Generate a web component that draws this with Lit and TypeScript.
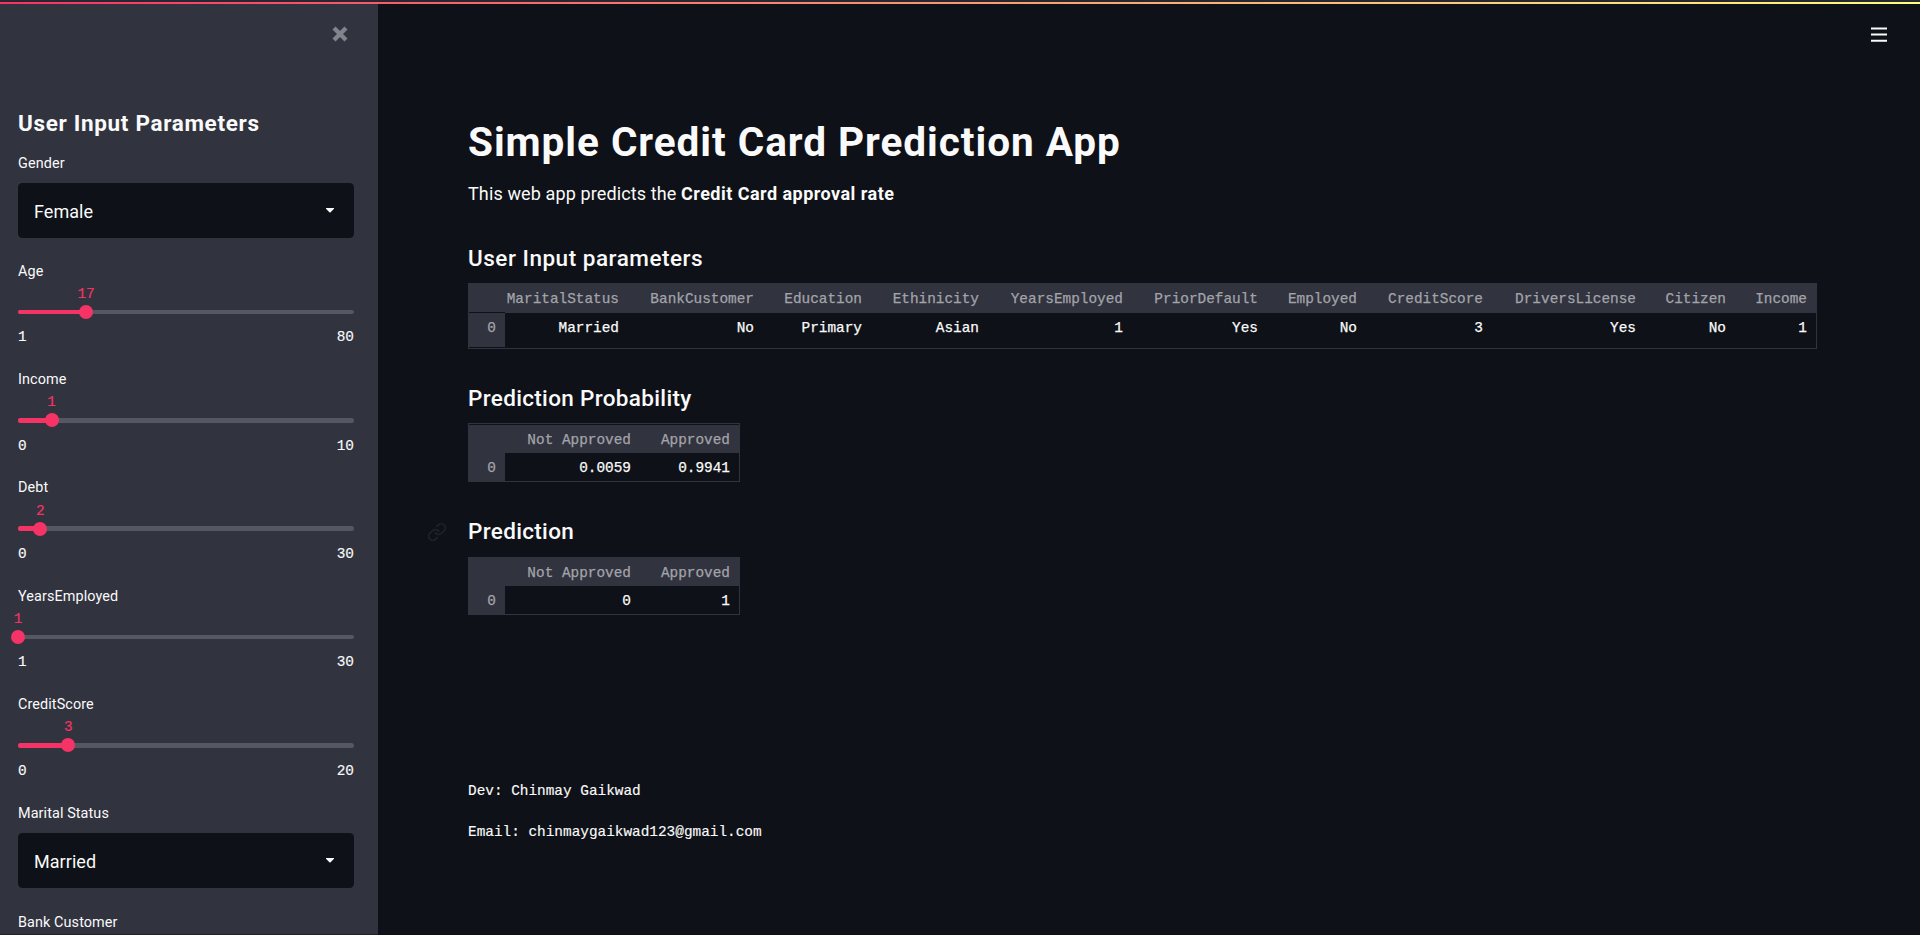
import { LitElement, html, css } from "lit";
import { customElement, property } from "lit/decorators.js";

const pct = (value: number, min: number, max: number) => ((value - min) / (max - min)) * 100;

@customElement("side-slider")
class SideSlider extends LitElement {
  @property() label = "";
  @property({ type: Number }) value = 0;
  @property({ type: Number }) min = 0;
  @property({ type: Number }) max = 10;

  static styles = css`
    :host { display: block; height: 108.33px; }
    .label { font-size: 14.4px; line-height: 24.4px; letter-spacing: 0.1px; }
    .mono { font-family: "Liberation Mono", monospace; font-size: 14.4px; line-height: 18px; -webkit-text-stroke: 0.15px; }
    .value { margin-top: 0.9px; color: #f63366; width: max-content; transform: translateX(-50%); }
    .track { position: relative; margin-top: 6.7px; height: 4.4px; border-radius: 4px; background: #555761; }
    .fill { height: 100%; background: #f63366; border-radius: 4px 0 0 4px; }
    .thumb { position: absolute; width: 14px; height: 14px; top: -4.7px; margin-left: -7px; border-radius: 50%; background: #f63366; }
    .range { display: flex; justify-content: space-between; margin-top: 14.2px; }
  `;

  render() {
    const p = pct(this.value, this.min, this.max);
    return html`
      <div class="label">${this.label}</div>
      <div class="mono value" style="margin-left:${p}%">${this.value}</div>
      <div class="track">
        <div class="fill" style="width:${p}%"></div>
        <div class="thumb" style="left:${p}%"></div>
      </div>
      <div class="mono range"><span>${this.min}</span><span>${this.max}</span></div>
    `;
  }
}

@customElement("side-select")
class SideSelect extends LitElement {
  @property() label = "";
  @property() value = "";

  static styles = css`
    :host { display: block; height: 108.33px; }
    .label { font-size: 14.4px; line-height: 25px; letter-spacing: 0.1px; }
    .box { display: flex; align-items: center; justify-content: space-between; box-sizing: border-box; height: 55px;
      margin-top: 7px; padding: 0 20px 0 16px; border-radius: 4.5px; background: #0e1117; font-size: 18px; letter-spacing: 0.05px; }
    .text { padding-top: 1px; }
    svg { display: block; }
  `;

  render() {
    return html`
      <div class="label">${this.label}</div>
      ${this.value
        ? html`<div class="box">
            <span class="text">${this.value}</span>
            <svg width="8" height="5" viewBox="0 0 8 5"><path d="M0 0H8V.8L4.6 4.3Q4 4.8 3.4 4.3L0 .8Z" fill="#fafafa" /></svg>
          </div>`
        : ""}
    `;
  }
}

@customElement("data-frame")
class DataFrame extends LitElement {
  @property({ attribute: false }) columns: { name: string; value: string; width: number }[] = [];

  static styles = css`
    :host { display: block; width: max-content; border: 1px solid #31333f; box-sizing: border-box;
      font-family: "Liberation Mono", monospace; font-size: 14.4px; color: #fafafa; }
    .row { display: flex; }
    .cell { box-sizing: border-box; text-align: right; padding-right: 10px; white-space: pre; flex: none; -webkit-text-stroke: 0.25px; }
    .cell:last-child { padding-right: 9px; }
    .head { box-sizing: border-box; background: #31333f; color: #a3a4a9; height: var(--head-height, 29px); line-height: var(--head-line, 31px);
      border-top: var(--top-rule, 0) solid #0e1117; }
    .body { height: var(--body-height, 28px); line-height: 30px; }
    .index { width: 36px; padding-right: 9px; background: #31333f; color: #a3a4a9; border-bottom: var(--index-rule, 0) solid #0e1117; }
  `;

  render() {
    return html`
      <div class="row head">
        <div class="cell index"></div>
        ${this.columns.map((c) => html`<div class="cell" style="width:${c.width}px">${c.name}</div>`)}
      </div>
      <div class="row body">
        <div class="cell index">0</div>
        ${this.columns.map((c) => html`<div class="cell" style="width:${c.width}px">${c.value}</div>`)}
      </div>
    `;
  }
}

const inputs = [
  { name: "MaritalStatus", value: "Married", width: 124 },
  { name: "BankCustomer", value: "No", width: 135 },
  { name: "Education", value: "Primary", width: 108 },
  { name: "Ethinicity", value: "Asian", width: 117 },
  { name: "YearsEmployed", value: "1", width: 144 },
  { name: "PriorDefault", value: "Yes", width: 135 },
  { name: "Employed", value: "No", width: 99 },
  { name: "CreditScore", value: "3", width: 126 },
  { name: "DriversLicense", value: "Yes", width: 153 },
  { name: "Citizen", value: "No", width: 90 },
  { name: "Income", value: "1", width: 80 },
];
const outcome = (no: string, yes: string) => [
  { name: "Not Approved", value: no, width: 136 },
  { name: "Approved", value: yes, width: 98 },
];

@customElement("app-root")
class AppRoot extends LitElement {
  static styles = css`
    :host { display: flex; position: relative; width: 100%; height: 935px; overflow: hidden; background: #0e1117;
      color: #fafafa; font-family: Roboto, sans-serif; font-size: 18px; }
    .stripe { position: absolute; inset: 0 0 auto 0; height: 2px; border-top: 2px solid #262730;
      background: linear-gradient(90deg, #f63366, #fffd80) padding-box; z-index: 2; }
    .edge { position: absolute; inset: auto 0 0 0; height: 1px; background: rgba(22, 8, 20, 0.45); z-index: 2; }
    .side { box-sizing: border-box; width: 378px; flex: none; padding: 26px 24px 0 18px; background: #31333f; }
    .close { display: flex; justify-content: flex-end; padding-right: 6px; height: 83.3px; }
    h1, h2, h3, p { margin: 0; }
    h2 { font-size: 22.5px; line-height: 28px; height: 42.2px; font-weight: 700; letter-spacing: 0.67px; }
    .main { flex: 1; padding: 115px 90px 0; }
    h1 { font-size: 40.5px; line-height: 54px; font-weight: 700; letter-spacing: 0.96px; }
    .lead { margin-top: 10.9px; line-height: 28px; letter-spacing: 0.12px; }
    .lead b { letter-spacing: 0.47px; }
    h3 { position: relative; font-size: 22.5px; line-height: 28px; font-weight: 500; letter-spacing: 0.33px; }
    .h-input { margin-top: 36.4px; letter-spacing: 0.52px; }
    .h-prob { margin-top: 35px; }
    .h-pred { margin-top: 35.3px; }
    .t-input { margin-top: 10.7px; --body-height: 35px; --index-rule: 1px; }
    .t-prob { margin-top: 11px; --top-rule: 1px; }
    .t-pred { margin-top: 11.7px; --head-height: 28px; --head-line: 31px; }
    .link { position: absolute; left: -41px; top: 4.5px; opacity: 0.07; }
    .menu { position: absolute; right: 33px; top: 27px; }
    .foot { font-family: "Liberation Mono", monospace; font-size: 14.4px; line-height: 22px; -webkit-text-stroke: 0.15px; }
    .dev { margin-top: 164.6px; }
    .mail { margin-top: 19px; }
  `;

  render() {
    return html`
      <div class="stripe"></div>
      <div class="edge"></div>
      <aside class="side">
        <div class="close">
          <svg width="16" height="16" viewBox="0 0 16 16"><path d="M2 2L14 14M14 2L2 14" stroke="#83848b" stroke-width="4.3" /></svg>
        </div>
        <h2>User Input Parameters</h2>
        <side-select label="Gender" value="Female"></side-select>
        <side-slider label="Age" value="17" min="1" max="80"></side-slider>
        <side-slider label="Income" value="1" min="0" max="10"></side-slider>
        <side-slider label="Debt" value="2" min="0" max="30"></side-slider>
        <side-slider label="YearsEmployed" value="1" min="1" max="30"></side-slider>
        <side-slider label="CreditScore" value="3" min="0" max="20"></side-slider>
        <side-select label="Marital Status" value="Married"></side-select>
        <side-select label="Bank Customer"></side-select>
      </aside>
      <main class="main">
        <h1>Simple Credit Card Prediction App</h1>
        <p class="lead">This web app predicts the <b>Credit Card approval rate</b></p>
        <h3 class="h-input">User Input parameters</h3>
        <data-frame class="t-input" .columns=${inputs}></data-frame>
        <h3 class="h-prob">Prediction Probability</h3>
        <data-frame class="t-prob" .columns=${outcome("0.0059", "0.9941")}></data-frame>
        <h3 class="h-pred">
          <svg class="link" width="20" height="20" viewBox="0 0 24 24" fill="none" stroke="#fafafa" stroke-width="2" stroke-linecap="round" stroke-linejoin="round">
            <path d="M10 13a5 5 0 0 0 7.54.54l3-3a5 5 0 0 0-7.07-7.07l-1.72 1.71" />
            <path d="M14 11a5 5 0 0 0-7.54-.54l-3 3a5 5 0 0 0 7.07 7.07l1.71-1.71" />
          </svg>Prediction
        </h3>
        <data-frame class="t-pred" .columns=${outcome("0", "1")}></data-frame>
        <p class="foot dev">Dev: Chinmay Gaikwad</p>
        <p class="foot mail">Email: chinmaygaikwad123@gmail.com</p>
      </main>
      <svg class="menu" width="16" height="15" viewBox="0 0 16 15"><path d="M0 1.5H16M0 7.5H16M0 13.8H16" stroke="#fafafa" stroke-width="2" /></svg>
    `;
  }
}
